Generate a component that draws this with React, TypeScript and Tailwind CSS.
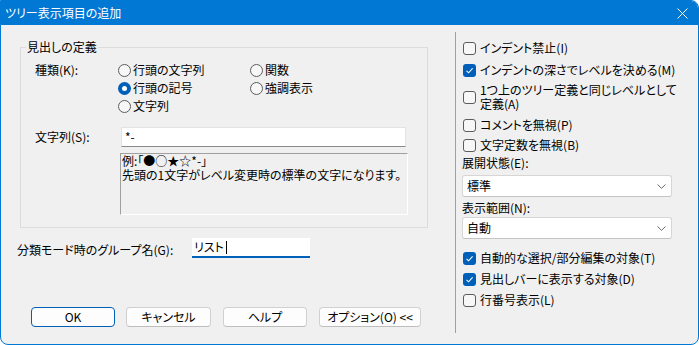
import React from 'react';

const font = "font-['Yu_Gothic_UI','Noto_Sans_CJK_JP',sans-serif] [font-feature-settings:'palt']";

const Radio: React.FC<{ label: string; checked?: boolean }> = ({ label, checked }) => (
    <div className="flex items-center h-[18px]">
        {checked ? (
            <span className="w-[13px] h-[13px] rounded-full bg-[#005fb8] flex items-center justify-center">
                <span className="w-[5px] h-[5px] rounded-full bg-white" />
            </span>
        ) : (
            <span className="w-[13px] h-[13px] rounded-full border border-[#5c5c5c] bg-[#f7f7f7]" />
        )}
        <span className="ml-[2px] leading-[16px]">{label}</span>
    </div>
);

const Check: React.FC<{ checked?: boolean; className?: string; children: React.ReactNode }> = ({ checked, className = '', children }) => (
    <div className={`flex items-center ${className}`}>
        {checked ? (
            <span className="shrink-0 w-[13px] h-[13px] rounded-[3px] bg-[#005fb8] flex items-center justify-center">
                <svg width="9" height="9" viewBox="0 0 9 9">
                    <path d="M1.5 4.8 L3.6 6.8 L7.6 2.4" fill="none" stroke="white" strokeWidth="1.1" />
                </svg>
            </span>
        ) : (
            <span className="shrink-0 w-[13px] h-[13px] rounded-[3px] border border-[#5c5c5c] bg-[#f7f7f7]" />
        )}
        <span className="ml-[4px]">{children}</span>
    </div>
);

const Select: React.FC<{ value: string; className?: string }> = ({ value, className = '' }) => (
    <div className={`w-[210px] h-[22px] bg-white border border-[#d6d6d6] border-b-[#c4c4c4] rounded-[3px] flex items-center justify-between pl-[4px] pr-[5px] ${className}`}>
        <span className="leading-[16px]">{value}</span>
        <svg width="9" height="5" viewBox="0 0 9 5">
            <path d="M0.5 0.5 L4.5 4.3 L8.5 0.5" fill="none" stroke="#6b6b6b" strokeWidth="1" />
        </svg>
    </div>
);

const Button: React.FC<{ label: string; primary?: boolean; className?: string }> = ({ label, primary, className = '' }) => (
    <div
        className={`h-[20px] rounded-[4px] bg-[#fdfdfd] flex items-center justify-center leading-[16px] ${
            primary ? 'border border-[#005fb8]' : 'border border-[#d0d0d0] border-b-[#bdbdbd]'
        } ${className}`}
    >
        {label}
    </div>
);

export default function App() {
    return (
        <div className={`w-[699px] h-[345px] bg-[#f0f0f0] border border-[#0078d4] rounded-tr-[8px] rounded-b-[8px] overflow-hidden text-[12px] text-black ${font}`}>
            {/* Title bar */}
            <div className="h-[24px] bg-[#0078d4] flex items-center justify-between text-white">
                <span className="ml-[4px] leading-[16px]">ツリー表示項目の追加</span>
                <svg width="11" height="11" viewBox="0 0 11 11" className="mr-[10px] mt-[1px]">
                    <path d="M0.5 0.5 L10.5 10.5 M10.5 0.5 L0.5 10.5" stroke="white" strokeWidth="1" />
                </svg>
            </div>

            <div className="flex h-[319px]">
                {/* Left column */}
                <div className="w-[454px] pt-[14px] pl-[19px]">
                    <fieldset className="w-[408px] h-[189px] border border-[#dcdcdc] pl-[5px]">
                        <legend className="px-px leading-[16px]">見出しの定義</legend>
                        <div className="pl-[9px]">
                            <div className="flex mt-[6px]">
                                <div className="w-[83px] h-[18px] flex items-center leading-[16px]">種類(K):</div>
                                <div className="grid grid-cols-[132px_auto]">
                                    <Radio label="行頭の文字列" />
                                    <Radio label="関数" />
                                    <Radio label="行頭の記号" checked />
                                    <Radio label="強調表示" />
                                    <Radio label="文字列" />
                                </div>
                            </div>
                            <div className="flex items-center mt-[12px]">
                                <div className="w-[86px] leading-[16px]">文字列(S):</div>
                                <div className="w-[285px] h-[20px] bg-white border border-[#e3e3e3] border-b-[#8a8a8a] flex items-center pl-[3px] leading-[16px]">
                                    *-
                                </div>
                            </div>
                            <div className="ml-[85px] mt-[6px] w-[288px] h-[62px] border border-[#a0a0a0] border-r-white border-b-white pl-px leading-[14px]">
                                <div>例:「●○★☆*-」</div>
                                <div>先頭の1文字がレベル変更時の標準の文字になります。</div>
                            </div>
                        </div>
                    </fieldset>

                    <div className="flex items-center mt-[10px] -ml-[3px]">
                        <div className="w-[175px] leading-[16px] pt-[3px]">分類モード時のグループ名(G):</div>
                        <div className="w-[118px] h-[20px] bg-white border-b-2 border-[#005fb8] flex items-center pl-[2px] leading-[16px]">
                            リスト
                            <span className="ml-[2px] w-px h-[13px] bg-black" />
                        </div>
                    </div>

                    <div className="flex mt-[49px] ml-[11px]">
                        <Button label="OK" primary className="w-[84px]" />
                        <Button label="キャンセル" className="w-[85px] ml-[11px]" />
                        <Button label="ヘルプ" className="w-[84px] ml-[12px]" />
                        <Button label="オプション(O) <<" className="w-[102px] ml-[12px]" />
                    </div>
                </div>

                {/* Separator */}
                <div className="w-px bg-[#a0a0a0] mt-[7px] mb-[11px]" />

                {/* Right column */}
                <div className="flex-1 pt-[15px] pl-[6px] leading-[16px]">
                    <Check className="ml-px">インデント禁止(I)</Check>
                    <Check checked className="ml-px mt-[6px]">インデントの深さでレベルを決める(M)</Check>
                    <Check className="ml-px mt-[5px]">
                        <span className="block leading-[14px]">
                            1つ上のツリー定義と同じレベルとして
                            <br />
                            定義(A)
                        </span>
                    </Check>
                    <Check className="ml-px mt-[6px]">コメントを無視(P)</Check>
                    <Check className="ml-px mt-[4px]">文字定数を無視(B)</Check>
                    <div className="mt-[2px]">展開状態(E):</div>
                    <Select value="標準" className="mt-[4px]" />
                    <div className="mt-[3px]">表示範囲(N):</div>
                    <Select value="自動" className="mt-px" />
                    <Check checked className="ml-px mt-[11px]">自動的な選択/部分編集の対象(T)</Check>
                    <Check checked className="ml-px mt-[5px]">見出しバーに表示する対象(D)</Check>
                    <Check className="ml-px mt-[5px]">行番号表示(L)</Check>
                </div>
            </div>
        </div>
    );
}
